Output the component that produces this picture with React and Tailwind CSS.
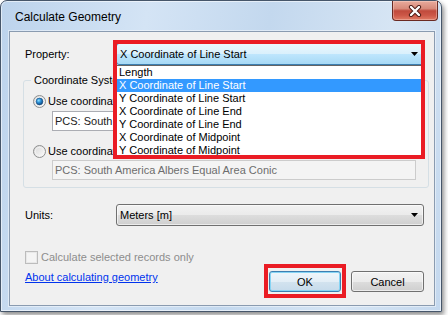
import React from 'react';

const Arrow = () => (
  <svg width="7" height="4" viewBox="0 0 7 4" className="shrink-0">
    <polygon points="0,0 7,0 3.5,4" fill="#000" />
  </svg>
);

const Radio = ({ checked }) => {
  const id = checked ? 'rb-on' : 'rb-off';
  return (
    <svg width="13" height="13" viewBox="0 0 13 13" className="shrink-0">
      <defs>
        <linearGradient id={`${id}-face`} x1="0" y1="0" x2="1" y2="1">
          <stop offset="0" stopColor="#d6d6d6" />
          <stop offset="1" stopColor="#fdfdfd" />
        </linearGradient>
        <radialGradient id={`${id}-dot`} cx="0.38" cy="0.35" r="0.7">
          <stop offset="0" stopColor="#8fe0ff" />
          <stop offset="0.45" stopColor="#2a8fd6" />
          <stop offset="1" stopColor="#0d3f74" />
        </radialGradient>
      </defs>
      <circle cx="6.5" cy="6.5" r="6" fill={`url(#${id}-face)`} stroke="#8e8f8f" />
      <circle cx="6.5" cy="6.5" r="4.2" fill="none" stroke="#f4f4f4" strokeWidth="0.8" />
      {checked && <circle cx="6.5" cy="6.5" r="3.4" fill={`url(#${id}-dot)`} stroke="#194e82" strokeWidth="0.6" />}
    </svg>
  );
};

const items = [
  'Length',
  'X Coordinate of Line Start',
  'Y Coordinate of Line Start',
  'X Coordinate of Line End',
  'Y Coordinate of Line End',
  'X Coordinate of Midpoint',
  'Y Coordinate of Midpoint',
];

export default function App() {
  return (
    <div className="w-[448px] h-[315px] bg-white overflow-hidden font-[family-name:'Liberation_Sans',Arial,sans-serif] text-[11px] leading-[16px] text-black">
      {/* Window */}
      <div className="w-[442px] h-[312px] rounded-t-[7px] border border-[#46566a] bg-[linear-gradient(100deg,#bcd3ec_0%,#d4e4f5_30%,#c3d8ee_55%,#d6e5f4_80%,#c4d8ee_100%)] shadow-[inset_0_0_0_1px_rgba(255,255,255,0.55),2px_3px_5px_rgba(0,0,0,0.45)] flex flex-col">
        {/* Title bar */}
        <div className="h-[30px] flex items-start justify-between">
          <span className="pl-[14px] pt-[9px] text-[12px] leading-[14px] text-black">Calculate Geometry</span>
          <div className="mr-[3px] w-[46px] h-[20px] rounded-b-[4px] border border-t-0 border-[#6a2a22] bg-[linear-gradient(180deg,#e9ab9c_0%,#d88a7a_40%,#c04a3c_52%,#cc5747_75%,#e07a64_100%)] shadow-[inset_0_0_0_1px_rgba(255,230,220,0.35)] flex items-center justify-center">
            <svg width="14" height="12" viewBox="0 0 14 12">
              <path d="M3 2 L11 10 M11 2 L3 10" stroke="#4b1812" strokeWidth="4.2" strokeLinecap="round" />
              <path d="M3 2 L11 10 M11 2 L3 10" stroke="#ffffff" strokeWidth="2.4" strokeLinecap="round" />
            </svg>
          </div>
        </div>

        {/* Client area */}
        <div className="ml-[8px] w-[426px] h-[275px] border border-[#8a9bb0] bg-[#f0f0f0] shadow-[0_0_0_1px_rgba(255,255,255,0.45)] flex flex-col">
          {/* Property */}
          <div className="mt-[11px] pl-[15px] flex items-center">
            <span className="w-[91px]">Property:</span>
            <div className="relative w-[308px] h-[22px]">
              <div className="h-full rounded-[3px] border border-[#3c7fb1] bg-[linear-gradient(180deg,#eaf6fd_0%,#d9f0fc_50%,#bee6fd_51%,#a7d9f5_100%)] flex items-center justify-between pl-[3px] pr-[5px]">
                <span>X Coordinate of Line Start</span>
                <Arrow />
              </div>
              <div className="absolute z-10 top-[22px] left-0 w-[308px] h-[93px] border border-[#646464] bg-white">
                {items.map((it, i) => (
                  <div
                    key={it}
                    className={`h-[13px] leading-[13px] pl-[2px] ${i === 1 ? 'bg-[#3399ff] text-white' : 'text-black'}`}
                  >
                    {it}
                  </div>
                ))}
              </div>
              <div className="absolute z-20 -left-[3px] -top-[3px] w-[312px] h-[119px] border-4 border-[#ea1c24] pointer-events-none" />
            </div>
          </div>

          {/* Coordinate system group */}
          <fieldset className="mt-[7px] ml-[13px] w-[406px] border border-[#d5dfe5] rounded-[3px] pb-[7px]">
            <legend className="ml-[7px] px-[3px] leading-[16px]">Coordinate System</legend>
            <div className="mt-[5px] pl-[9px] h-[16px] flex items-center gap-[2px]">
              <Radio checked />
              <span>Use coordinate system of the data source:</span>
            </div>
            <div className="mt-[2px] ml-[28px] w-[364px] h-[20px] border border-[#abadb3] bg-white pl-[2px] flex items-center text-[#222]">
              PCS: South America Albers Equal Area Conic
            </div>
            <div className="mt-[12px] pl-[9px] h-[16px] flex items-center gap-[2px]">
              <Radio />
              <span>Use coordinate system of the data frame:</span>
            </div>
            <div className="mt-[1px] ml-[28px] w-[364px] h-[20px] border border-[#cccccc] bg-[#f4f4f4] pl-[2px] flex items-center text-[#6d6d6d]">
              PCS: South America Albers Equal Area Conic
            </div>
          </fieldset>

          {/* Units */}
          <div className="mt-[16px] pl-[15px] flex items-center">
            <span className="w-[91px]">Units:</span>
            <div className="w-[308px] h-[22px] rounded-[3px] border border-[#707070] bg-[linear-gradient(180deg,#f2f2f2_0%,#ebebeb_50%,#dddddd_51%,#cfcfcf_100%)] shadow-[inset_0_0_0_1px_rgba(255,255,255,0.6)] flex items-center justify-between pl-[3px] pr-[5px]">
              <span>Meters [m]</span>
              <Arrow />
            </div>
          </div>

          {/* Bottom */}
          <div className="mt-[23px] flex items-start">
            <div className="pl-[15px] flex flex-col">
              <div className="h-[16px] flex items-center gap-[3px] text-[#8d8d8d]">
                <span className="w-[13px] h-[13px] border border-[#bcbcbc] bg-[#f4f4f4] shadow-[inset_0_0_0_1px_#e8e8e8]" />
                <span>Calculate selected records only</span>
              </div>
              <a href="#" className="mt-[4px] text-[#0033ee] underline underline-offset-[1px]">About calculating geometry</a>
            </div>
            <div className="ml-auto mr-[10px] flex items-start">
              <div className="mt-[15px] border-4 border-[#ea1c24] px-[1px] pt-[3px] pb-[2px]">
                <div className="w-[72px] h-[21px] rounded-[3px] border border-[#3c7fb1] bg-[linear-gradient(180deg,#eef6fb_0%,#e3eef6_50%,#d3e3ef_51%,#c6dbeb_100%)] shadow-[inset_0_0_0_1px_#86d4f4] flex items-center justify-center">
                  OK
                </div>
              </div>
              <div className="mt-[22px] ml-[5px] w-[73px] h-[21px] rounded-[3px] border border-[#707070] bg-[linear-gradient(180deg,#f2f2f2_0%,#ebebeb_50%,#dddddd_51%,#cfcfcf_100%)] shadow-[inset_0_0_0_1px_rgba(255,255,255,0.6)] flex items-center justify-center">
                Cancel
              </div>
            </div>
          </div>
        </div>
      </div>
    </div>
  );
}
